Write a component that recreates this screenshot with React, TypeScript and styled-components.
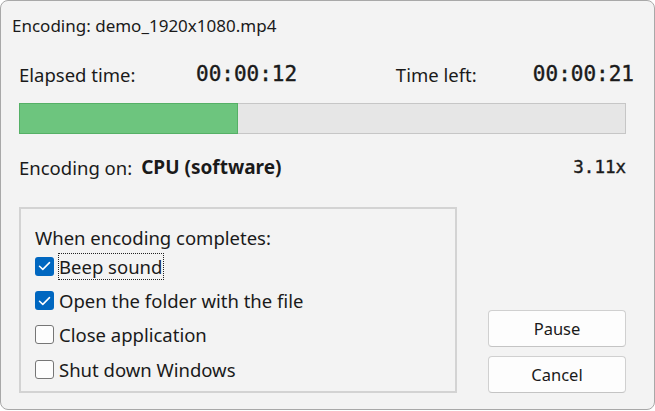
import React from "react";
import styled, { createGlobalStyle } from "styled-components";

const Global = createGlobalStyle`
  html, body { margin: 0; padding: 0; background: #ffffff; }
  body { width: 655px; height: 411px; overflow: hidden; font-family: "Noto Sans", "Open Sans", sans-serif; color: #1a1a1a; }
`;

const Window = styled.div`
  box-sizing: border-box;
  width: 655px;
  height: 410px;
  background: #f3f3f3;
  border: 1px solid #a8a8a8;
  border-radius: 8px;
  display: flex;
  flex-direction: column;
  padding: 0 28px 0 18px;
`;

const Title = styled.div`
  font-size: 17px;
  margin: 13px 0 0 -7px;
  height: 24px;
  line-height: 24px;
  color: #1a1a1a;
`;

const TimeRow = styled.div`
  display: flex;
  align-items: center;
  margin-top: 23px;
  height: 26px;
`;

const Label = styled.span<{ $w?: number }>`
  font-size: 18.5px;
  width: ${(p) => (p.$w ? `${p.$w}px` : "auto")};
  flex: none;
`;

const Mono = styled.span<{ $size: number; $w?: number; $pull?: number }>`
  font-family: "DejaVu Sans Mono", "Liberation Mono", monospace;
  font-size: ${(p) => p.$size}px;
  font-weight: 400;
  -webkit-text-stroke: 0.4px #1a1a1a;
  width: ${(p) => (p.$w ? `${p.$w}px` : "auto")};
  margin-right: ${(p) => (p.$pull ? `-${p.$pull}px` : "0")};
  flex: none;
`;

const Spacer = styled.div`
  flex: 1;
`;

const Track = styled.div`
  box-sizing: border-box;
  margin-top: 16px;
  height: 31px;
  background: #e6e6e6;
  border: 1px solid #c6c6c6;
  display: flex;
`;

const Fill = styled.div`
  box-sizing: border-box;
  background: #6dc57e;
  border: 1px solid #55b066;
  margin: -1px 0 0 -1px;
  height: 31px;
`;

const EncodeRow = styled.div`
  display: flex;
  align-items: center;
  margin-top: 20px;
  height: 26px;
`;

const Bold = styled.span`
  font-size: 19px;
  font-weight: 700;
  margin-left: 9px;
`;

const Bottom = styled.div`
  display: flex;
  align-items: flex-end;
  margin-top: 27px;
`;

const Group = styled.div`
  box-sizing: border-box;
  width: 439px;
  height: 186px;
  border: 2px solid #d3d3d3;
  padding: 18px 0 0 14px;
  display: flex;
  flex-direction: column;
`;

const GroupTitle = styled.div`
  font-size: 18.5px;
  height: 22px;
  line-height: 22px;
`;

const CheckRow = styled.label`
  display: flex;
  align-items: center;
  height: 34.4px;
  font-size: 18.5px;
  gap: 5px;
`;

const Box = styled.span<{ $on: boolean }>`
  box-sizing: border-box;
  width: 19px;
  height: 19px;
  border-radius: 3px;
  background: ${(p) => (p.$on ? "#0067c0" : "#fdfdfd")};
  border: ${(p) => (p.$on ? "none" : "1.5px solid #767676")};
  display: flex;
  align-items: center;
  justify-content: center;
  flex: none;
`;

const CheckText = styled.span<{ $focus?: boolean }>`
  outline: ${(p) => (p.$focus ? "1px dotted #222" : "none")};
  outline-offset: 0px;
  line-height: 25px;
  padding-right: 1px;
`;

const Buttons = styled.div`
  display: flex;
  flex-direction: column;
  gap: 9px;
  margin-left: 31px;
`;

const Button = styled.button`
  box-sizing: border-box;
  width: 138px;
  height: 37px;
  background: #fdfdfd;
  border: 1px solid #d0d0d0;
  border-bottom-color: #c4c4c4;
  border-radius: 4px;
  font-family: "Noto Sans", "Open Sans", sans-serif;
  font-size: 16.5px;
  color: #1a1a1a;
  padding: 0;
`;

const Tick = () => (
  <svg width="13" height="10" viewBox="0 0 13 10">
    <path d="M1.5 5.2 L4.8 8.4 L11.5 1.6" fill="none" stroke="#fff" strokeWidth="1.5" strokeLinecap="round" strokeLinejoin="round" />
  </svg>
);

const items = [
  { text: "Beep sound", on: true, focus: true },
  { text: "Open the folder with the file", on: true },
  { text: "Close application", on: false },
  { text: "Shut down Windows", on: false },
];

export default function App() {
  const progress = 0.362;
  return (
    <>
      <Global />
      <Window>
        <Title>Encoding: demo_1920x1080.mp4</Title>
        <TimeRow>
          <Label $w={177}>Elapsed time:</Label>
          <Mono $size={21}>00:00:12</Mono>
          <Spacer />
          <Label $w={137}>Time left:</Label>
          <Mono $size={21} $pull={8}>00:00:21</Mono>
        </TimeRow>
        <Track>
          <Fill style={{ width: `${progress * 100}%` }} />
        </Track>
        <EncodeRow>
          <Label>Encoding on:</Label>
          <Bold>CPU (software)</Bold>
          <Spacer />
          <Mono $size={17.5}>3.11x</Mono>
        </EncodeRow>
        <Bottom>
          <Group>
            <GroupTitle>When encoding completes:</GroupTitle>
            {items.map((it) => (
              <CheckRow key={it.text}>
                <Box $on={it.on}>{it.on && <Tick />}</Box>
                <CheckText $focus={it.focus}>{it.text}</CheckText>
              </CheckRow>
            ))}
          </Group>
          <Buttons>
            <Button>Pause</Button>
            <Button>Cancel</Button>
          </Buttons>
        </Bottom>
      </Window>
    </>
  );
}
